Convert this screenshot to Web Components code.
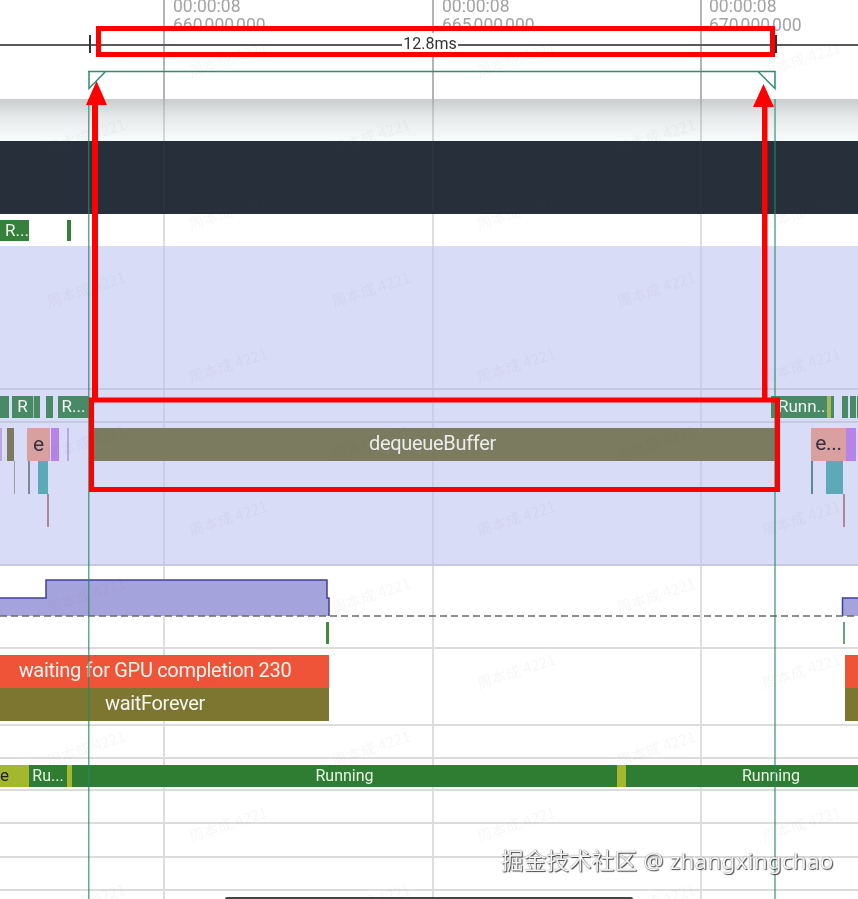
<!DOCTYPE html>
<html lang="en">
<head>
<meta charset="UTF-8">
<title>Trace</title>
<style>
  html, body { margin: 0; height: 100%; background: #fff; overflow: hidden; }
  body { font-family: Roboto, "Noto Sans CJK SC", sans-serif; }
</style>
</head>
<body>
<trace-view>
  <time-ruler>
    <time-mark x="173" time="00:00:08" ns="660 000 000"></time-mark>
    <time-mark x="442" time="00:00:08" ns="665 000 000"></time-mark>
    <time-mark x="709" time="00:00:08" ns="670 000 000"></time-mark>
    <time-span from="89" to="775">12.8ms</time-span>
  </time-ruler>

  <trace-track h="42" style="--fill:linear-gradient(#c9cdcd,#e6eaea 45%,#f8fbfb);--rule:transparent;--line:rgba(0,0,0,.13)"></trace-track>
  <trace-track h="73" style="--bg:#272f3b;--rule:#272f3b;--line:rgba(255,255,255,.02)"></trace-track>

  <trace-track h="32" style="--rule:transparent">
    <trace-slice x="-4" w="33" y="6" h="21" color="#35803a" left="9">R...</trace-slice>
    <trace-slice x="67" w="4" y="6" h="21" color="#35803a"></trace-slice>
  </trace-track>

  <trace-track h="144" style="--bg:#d9dcf6;--rule:#c5c8e2;--line:#cbcee9"></trace-track>

  <trace-track h="33" style="--bg:#d9dcf6;--rule:#c5c8e2;--line:#cbcee9">
    <trace-slice x="-4" w="13" y="6" h="22" color="#488a66"></trace-slice>
    <trace-slice x="12" w="21" y="6" h="22" color="#488a66">R</trace-slice>
    <trace-slice x="33" w="1" y="6" h="22" color="#9cc0ac"></trace-slice>
    <trace-slice x="34" w="6" y="6" h="22" color="#488a66"></trace-slice>
    <trace-slice x="46" w="7" y="6" h="22" color="#488a66"></trace-slice>
    <trace-slice x="58" w="31" y="6" h="22" color="#488a66">R...</trace-slice>
    <trace-slice x="771" w="63" y="6" h="22" color="#488a66" left="7">Runn...</trace-slice>
    <trace-slice x="827" w="4" y="6" h="22" color="#a3b95a"></trace-slice>
    <trace-slice x="842" w="6" y="6" h="22" color="#488a66"></trace-slice>
    <trace-slice x="850" w="6" y="6" h="22" color="#488a66"></trace-slice>
    <trace-slice x="857" w="3" y="6" h="22" color="#488a66"></trace-slice>
  </trace-track>

  <trace-track h="143" style="--bg:#d9dcf6;--rule:#c5c8e2;--line:#cbcee9">
    <trace-slice x="0" w="2" y="5" h="33" color="#bba6e2"></trace-slice>
    <trace-slice x="7" w="7" y="5" h="33" color="#7b7b5f"></trace-slice>
    <trace-slice x="27" w="23" y="5" h="33" color="#d9a0a0" ink="#3a3040" size="21">e</trace-slice>
    <trace-slice x="51" w="8" y="5" h="33" color="#b783e8"></trace-slice>
    <trace-slice x="67" w="2" y="5" h="33" color="#bba6e2"></trace-slice>
    <trace-slice x="13.5" w="1.5" y="38" h="33" color="#9aa0a0"></trace-slice>
    <trace-slice x="28" w="1.5" y="38" h="33" color="#7c8a9a"></trace-slice>
    <trace-slice x="38" w="10" y="38" h="33" color="#5caab6"></trace-slice>
    <trace-slice x="47" w="1.5" y="71" h="33" color="#a88a9a"></trace-slice>
    <trace-slice x="89" w="687" y="5" h="33" color="#7b7b5f" ink="#ececec" size="20" tight>dequeueBuffer</trace-slice>
    <trace-slice x="811" w="35" y="5" h="33" color="#d9a0a0" ink="#3a3040" size="21" tight>e...</trace-slice>
    <trace-slice x="846" w="10" y="5" h="33" color="#b783e8"></trace-slice>
    <trace-slice x="811" w="1.5" y="38" h="33" color="#5a8a9a"></trace-slice>
    <trace-slice x="826" w="17" y="38" h="33" color="#5caab6"></trace-slice>
    <trace-slice x="843" w="1.5" y="71" h="33" color="#a88a9a"></trace-slice>
  </trace-track>

  <counter-track></counter-track>

  <trace-track h="32">
    <trace-slice x="326" w="3" y="5" h="22" color="#3f8b3f"></trace-slice>
    <trace-slice x="843" w="2" y="5" h="22" color="#6aa57a"></trace-slice>
  </trace-track>

  <trace-track h="77">
    <trace-slice x="-19" w="348" y="6" h="33" color="#ef5438" size="20" tight>waiting for GPU completion 230</trace-slice>
    <trace-slice x="-19" w="348" y="39" h="33" color="#7c7631" size="20" tight>waitForever</trace-slice>
    <trace-slice x="845" w="20" y="6" h="33" color="#ef5438"></trace-slice>
    <trace-slice x="845" w="20" y="39" h="33" color="#7c7631"></trace-slice>
  </trace-track>

  <trace-track h="33"></trace-track>

  <trace-track h="32">
    <trace-slice x="-4" w="33" y="6" h="22" color="#a4b82d" ink="#222" left="4" size="17">e</trace-slice>
    <trace-slice x="29" w="38" y="6" h="22" color="#2e7d32" ink="#e8f5e4" size="16">Ru...</trace-slice>
    <trace-slice x="67" w="5" y="6" h="22" color="#a4b82d"></trace-slice>
    <trace-slice x="72" w="545" y="6" h="22" color="#2e7d32" ink="#e8f5e4" size="16">Running</trace-slice>
    <trace-slice x="617" w="9" y="6" h="22" color="#a4b82d"></trace-slice>
    <trace-slice x="626" w="290" y="6" h="22" color="#2e7d32" ink="#e8f5e4" size="16">Running</trace-slice>
  </trace-track>

  <trace-track h="33"></trace-track>
  <trace-track h="34"></trace-track>
  <trace-track h="33"></trace-track>
  <trace-track h="8" style="--rule:transparent"></trace-track>

  <water-mark></water-mark>
  <mark-overlay></mark-overlay>
  <site-credit>掘金技术社区 @ zhangxingchao</site-credit>
  <home-bar></home-bar>
</trace-view>

<script>
  const px = (el, attr, fallback) => (el.hasAttribute(attr) ? el.getAttribute(attr) : fallback) + 'px';

  class TraceView extends HTMLElement {
    constructor() {
      super();
      this.attachShadow({ mode: 'open' }).innerHTML = `
        <style>
          :host { display: flex; flex-direction: column; position: relative; width: 858px; height: 899px; overflow: hidden; filter: blur(.45px); }
        </style>
        <slot></slot>`;
    }
  }

  // grid lines are drawn as the track's background so slices sit over them
  const trackCss = `
    box-sizing: border-box;
    position: relative;
    flex: none;
    overflow: hidden;
    background-color: var(--bg, #fff);
    background-image:
      linear-gradient(var(--line, #dedede), var(--line, #dedede)),
      linear-gradient(var(--line, #dedede), var(--line, #dedede)),
      linear-gradient(var(--line, #dedede), var(--line, #dedede)),
      var(--fill, none);
    background-origin: border-box;
    background-size: 2px 100%, 2px 100%, 2px 100%, 100% 100%;
    background-position: 163px 0, 432px 0, 700px 0, 0 0;
    background-repeat: no-repeat;`;

  class TraceTrack extends HTMLElement {
    constructor() {
      super();
      this.attachShadow({ mode: 'open' }).innerHTML = `
        <style>
          :host { display: block; ${trackCss} border-bottom: 2px solid var(--rule, #dcdcdc); }
        </style>
        <slot></slot>`;
    }
    connectedCallback() {
      this.style.height = px(this, 'h', 33);
    }
  }

  class TraceSlice extends HTMLElement {
    constructor() {
      super();
      this.attachShadow({ mode: 'open' }).innerHTML = `
        <style>
          :host {
            position: absolute;
            box-sizing: border-box;
            display: flex;
            align-items: center;
            justify-content: center;
            padding-bottom: 2px;
            white-space: nowrap;
            font-family: Roboto, sans-serif;
          }
          :host([tight]) { letter-spacing: -.32px; padding-bottom: 3px; }
        </style>
        <slot></slot>`;
    }
    connectedCallback() {
      const s = this.style;
      s.left = px(this, 'x', 0);
      s.width = px(this, 'w', 10);
      s.top = px(this, 'y', 0);
      s.height = px(this, 'h', 22);
      s.background = this.getAttribute('color');
      s.color = this.getAttribute('ink') || '#f2f5f2';
      s.fontSize = px(this, 'size', 17);
      if (this.hasAttribute('left')) {
        s.justifyContent = 'flex-start';
        s.paddingLeft = px(this, 'left', 0);
      }
    }
  }

  class TimeRuler extends HTMLElement {
    constructor() {
      super();
      this.attachShadow({ mode: 'open' }).innerHTML = `
        <style>
          :host { display: block; ${trackCss} height: 99px; --line: #b4b4b4; }
          svg { position: absolute; left: 0; top: 0; }
        </style>
        <slot></slot>
        <svg width="858" height="99">
          <path d="M88 71.5H775V88.5L758 71.5M89 71.5V88.5L105.5 71.5" fill="none" stroke="#2f8d71" stroke-width="1.5"/>
        </svg>`;
    }
  }

  class TimeMark extends HTMLElement {
    constructor() {
      super();
      this.attachShadow({ mode: 'open' }).innerHTML = `
        <style>
          :host {
            position: absolute;
            top: 0;
            font: 17.5px/13px Roboto, sans-serif;
            color: #a3a3a3;
            white-space: nowrap;
          }
          div { display: block; }
          #n { margin-top: 5.5px; word-spacing: -2.3px; }
        </style>
        <div id="t"></div><div id="n"></div>`;
    }
    connectedCallback() {
      this.style.left = px(this, 'x', 0);
      this.shadowRoot.getElementById('t').textContent = this.getAttribute('time');
      this.shadowRoot.getElementById('n').textContent = this.getAttribute('ns');
    }
  }

  class TimeSpan extends HTMLElement {
    constructor() {
      super();
      this.attachShadow({ mode: 'open' }).innerHTML = `
        <style>
          :host {
            position: absolute;
            left: 0; right: 0; top: 34px;
            height: 20px;
            display: block;
          }
          .line { position: absolute; left: 0; right: 0; top: 10px; height: 2px; background: #595959; }
          .tick { position: absolute; top: 1px; height: 18px; width: 2px; background: #333; }
          .label {
            position: absolute; left: 402px; width: 56px; top: -1px; height: 21px;
            background: #fff;
            text-align: center;
            font: 16px/21px Roboto, sans-serif;
            color: #333;
          }
        </style>
        <div class="line"></div>
        <div class="tick" id="a"></div>
        <div class="tick" id="b"></div>
        <div class="label"><slot></slot></div>`;
    }
    connectedCallback() {
      this.shadowRoot.getElementById('a').style.left = px(this, 'from', 0);
      this.shadowRoot.getElementById('b').style.left = px(this, 'to', 0);
    }
  }

  class CounterTrack extends HTMLElement {
    constructor() {
      super();
      this.attachShadow({ mode: 'open' }).innerHTML = `
        <style>
          :host { display: block; ${trackCss} height: 51px; }
          svg { position: absolute; left: 0; top: 0; }
        </style>
        <svg width="858" height="51">
          <path d="M-2 32H46V14H327V32H329V50H-2Z" fill="#a5a3dc"/>
          <path d="M860 32H842.5V50H860Z" fill="#a5a3dc"/>
          <path d="M-2 32H46V14H327V32H329V50M860 32H842.5V50" fill="none" stroke="#3f3f96" stroke-width="1.5"/>
          <line x1="0" y1="50" x2="858" y2="50" stroke="#6a6a6a" stroke-width="1.5" stroke-dasharray="7 4"/>
        </svg>`;
    }
  }

  // faint name watermark the blog image carries, staggered every other row
  class WaterMark extends HTMLElement {
    constructor() {
      super();
      let marks = '';
      for (let row = 0; row < 12; row++) {
        const odd = row % 2 === 0;
        const xs = odd ? [187, 475, 760] : [45, 330, 615];
        for (const x of xs) {
          marks += `<span style="left:${x}px;top:${48 + row * 76.5}px">周本成 4221</span>`;
        }
      }
      this.attachShadow({ mode: 'open' }).innerHTML = `
        <style>
          :host { position: absolute; inset: 0; display: block; pointer-events: none; }
          span {
            position: absolute;
            font: 15px "Noto Sans CJK SC", Roboto, sans-serif;
            color: rgba(90, 100, 110, .05);
            transform: rotate(-18deg);
            white-space: nowrap;
          }
        </style>${marks}`;
    }
  }

  // green selection lines and the red annotation drawn over the shot
  class MarkOverlay extends HTMLElement {
    constructor() {
      super();
      this.attachShadow({ mode: 'open' }).innerHTML = `
        <style>
          :host { position: absolute; inset: 0; display: block; pointer-events: none; }
          svg { position: absolute; left: 0; top: 0; }
        </style>
        <svg width="858" height="899">
          <g stroke="#1f8a6a" stroke-opacity=".72" stroke-width="1.5">
            <line x1="88.75" y1="99" x2="88.75" y2="899"/>
            <line x1="775" y1="99" x2="775" y2="899"/>
          </g>
          <g fill="none" stroke="#fe0000" stroke-width="5">
            <rect x="98.5" y="28.5" width="674" height="26"/>
            <rect x="91.5" y="400" width="686" height="89.5"/>
          </g>
          <g fill="#fe0000">
            <path d="M92 400V105H86L96.5 81L107 105H98V400Z"/>
            <path d="M762 400V107H753L763.5 84L774 107H767.5V400Z"/>
          </g>
        </svg>`;
    }
  }

  class SiteCredit extends HTMLElement {
    constructor() {
      super();
      this.attachShadow({ mode: 'open' }).innerHTML = `
        <style>
          :host {
            position: absolute;
            left: 501px; top: 845px;
            font: 22.5px/32px "Noto Sans", "Noto Sans CJK SC", sans-serif;
            letter-spacing: .2px;
            color: #f4f4f4;
            text-shadow: 1px 1px 1px rgba(0, 0, 0, .7), 0 0 1px rgba(0, 0, 0, .55);
            white-space: nowrap;
          }
        </style>
        <slot></slot>`;
    }
  }

  class HomeBar extends HTMLElement {
    constructor() {
      super();
      this.attachShadow({ mode: 'open' }).innerHTML = `
        <style>
          :host {
            position: absolute;
            left: 225px; width: 408px; top: 897px; height: 2px;
            display: block;
            background: #444;
            border-radius: 4px 4px 0 0;
          }
        </style>`;
    }
  }

  customElements.define('trace-view', TraceView);
  customElements.define('trace-track', TraceTrack);
  customElements.define('trace-slice', TraceSlice);
  customElements.define('time-ruler', TimeRuler);
  customElements.define('time-mark', TimeMark);
  customElements.define('time-span', TimeSpan);
  customElements.define('counter-track', CounterTrack);
  customElements.define('water-mark', WaterMark);
  customElements.define('mark-overlay', MarkOverlay);
  customElements.define('site-credit', SiteCredit);
  customElements.define('home-bar', HomeBar);
</script>
</body>
</html>
